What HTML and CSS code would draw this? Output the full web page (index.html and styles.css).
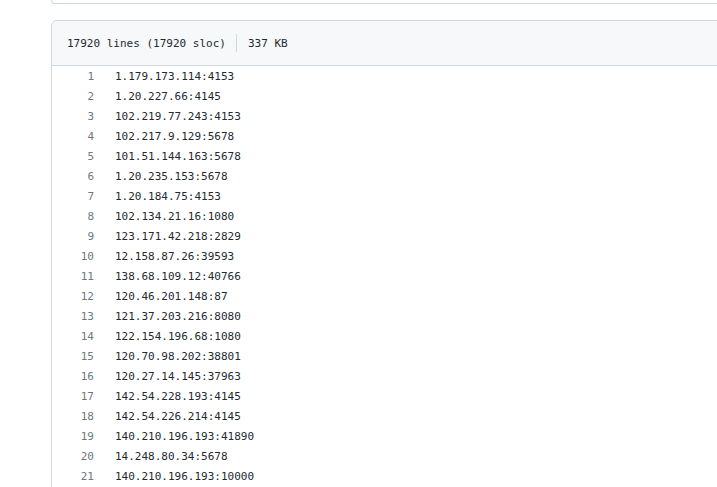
FILE: index.html
```html
<!DOCTYPE html>
<html lang="en">
<head>
<meta charset="utf-8">
<title>proxies</title>
<link rel="stylesheet" href="styles.css">
</head>
<body>
<div class="page">
  <div class="top-card"></div>
  <div class="file-box">
    <div class="file-header">
      <span class="file-info">17920 lines (17920 sloc)</span>
      <span class="divider"></span>
      <span class="file-info">337 KB</span>
    </div>
    <div class="blob">
      <div class="row"><span class="num">1</span><span class="code">1.179.173.114:4153</span></div>
      <div class="row"><span class="num">2</span><span class="code">1.20.227.66:4145</span></div>
      <div class="row"><span class="num">3</span><span class="code">102.219.77.243:4153</span></div>
      <div class="row"><span class="num">4</span><span class="code">102.217.9.129:5678</span></div>
      <div class="row"><span class="num">5</span><span class="code">101.51.144.163:5678</span></div>
      <div class="row"><span class="num">6</span><span class="code">1.20.235.153:5678</span></div>
      <div class="row"><span class="num">7</span><span class="code">1.20.184.75:4153</span></div>
      <div class="row"><span class="num">8</span><span class="code">102.134.21.16:1080</span></div>
      <div class="row"><span class="num">9</span><span class="code">123.171.42.218:2829</span></div>
      <div class="row"><span class="num">10</span><span class="code">12.158.87.26:39593</span></div>
      <div class="row"><span class="num">11</span><span class="code">138.68.109.12:40766</span></div>
      <div class="row"><span class="num">12</span><span class="code">120.46.201.148:87</span></div>
      <div class="row"><span class="num">13</span><span class="code">121.37.203.216:8080</span></div>
      <div class="row"><span class="num">14</span><span class="code">122.154.196.68:1080</span></div>
      <div class="row"><span class="num">15</span><span class="code">120.70.98.202:38801</span></div>
      <div class="row"><span class="num">16</span><span class="code">120.27.14.145:37963</span></div>
      <div class="row"><span class="num">17</span><span class="code">142.54.228.193:4145</span></div>
      <div class="row"><span class="num">18</span><span class="code">142.54.226.214:4145</span></div>
      <div class="row"><span class="num">19</span><span class="code">140.210.196.193:41890</span></div>
      <div class="row"><span class="num">20</span><span class="code">14.248.80.34:5678</span></div>
      <div class="row"><span class="num">21</span><span class="code">140.210.196.193:10000</span></div>
    </div>
  </div>
</div>
</body>
</html>
```
FILE: styles.css
```css
html, body {
  margin: 0;
  padding: 0;
  overflow: hidden;
  background: #ffffff;
}

.page {
  padding-left: 51px;
  width: 1000px;
}

.top-card {
  height: 3px;
  border: 1px solid #d0d7de;
  border-top: none;
  border-radius: 0 0 6px 6px;
}

.file-box {
  margin-top: 16px;
  border: 1px solid #d0d7de;
  border-radius: 6px;
  font-family: "DejaVu Sans Mono", "Liberation Mono", monospace;
  font-size: 11px;
}

.file-header {
  display: flex;
  align-items: center;
  height: 44px;
  padding-left: 15px;
  background: #f6f8fa;
  border-bottom: 1px solid #d0d7de;
  border-radius: 6px 6px 0 0;
  color: #24292f;
}

.divider {
  width: 1px;
  height: 18px;
  background: #d0d7de;
  margin: 0 11px 0 10px;
}

.blob {
  padding-top: 1px;
  padding-bottom: 8px;
}

.row {
  display: flex;
  height: 20px;
  line-height: 20px;
}

.num {
  width: 42px;
  padding-right: 10px;
  text-align: right;
  color: #6e7781;
}

.code {
  padding-left: 11px;
  color: #24292f;
}
```
